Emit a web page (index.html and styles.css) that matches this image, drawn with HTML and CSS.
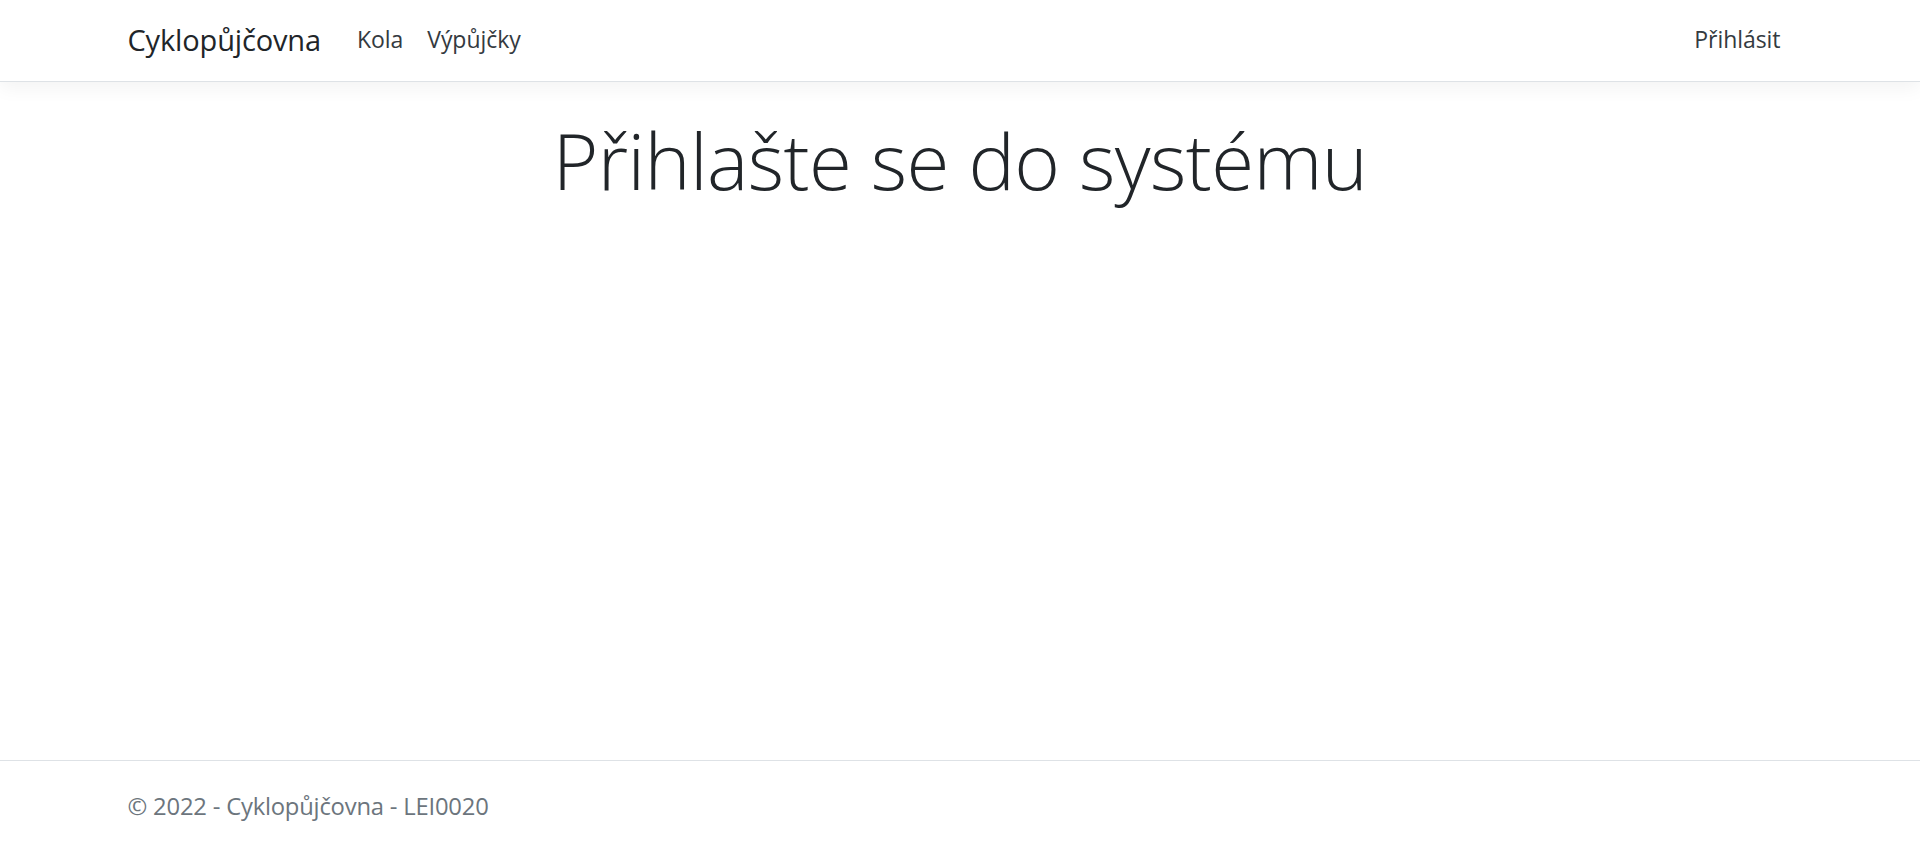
FILE: index.html
```html
<!DOCTYPE html>
<html lang="cs">
<head>
<meta charset="utf-8">
<title>Cyklopůjčovna</title>
<link rel="stylesheet" href="styles.css">
</head>
<body>
<header class="site-header">
  <nav class="navbar">
    <div class="container nav-inner">
      <a class="brand" href="#">Cyklopůjčovna</a>
      <ul class="nav-list">
        <li><a class="nav-link" href="#">Kola</a></li>
        <li><a class="nav-link" href="#">Výpůjčky</a></li>
      </ul>
      <ul class="nav-list nav-right">
        <li><a class="nav-link" href="#">Přihlásit</a></li>
      </ul>
    </div>
  </nav>
</header>
<main class="main">
  <div class="container">
    <div class="text-center">
      <h1 class="display">Přihlašte se do systému</h1>
    </div>
  </div>
</main>
<footer class="footer">
  <div class="container">© 2022 - Cyklopůjčovna - LEI0020</div>
</footer>
</body>
</html>
```

FILE: styles.css
```css
* { box-sizing: border-box; }
html, body { height: 100%; }
body {
  margin: 0;
  font-family: "Segoe UI", "Open Sans", "Noto Sans", Arial, sans-serif;
  font-size: 24px;
  line-height: 1.5;
  color: #212529;
  background: #fff;
  display: flex;
  flex-direction: column;
  min-height: 100vh;
}
a { text-decoration: none; }
.container {
  width: 100%;
  max-width: 1710px;
  margin: 0 auto;
  padding: 0 22.5px;
}
.navbar {
  height: 82px;
  background: #fff;
  border-bottom: 1px solid #dee2e6;
  box-shadow: 0 6px 18px rgba(0, 0, 0, 0.05);
}
.nav-inner {
  height: 100%;
  display: flex;
  align-items: center;
}
.brand {
  font-size: 29px;
  letter-spacing: -0.15px;
  line-height: 45px;
  color: #212529;
  margin-right: 24px;
  margin-top: -2px;
}
.nav-list {
  list-style: none;
  margin: 0;
  padding: 0;
  display: flex;
}
.nav-right { margin-left: auto; }
.nav-link {
  display: block;
  padding: 0 12px;
  font-size: 23px;
  letter-spacing: -0.05px;
  line-height: 36px;
  color: #343a40;
  margin-top: -3px;
}
.main {
  flex: 1;
  padding-top: 32px;
}
.text-center { text-align: center; }
.display {
  margin: 0 0 12px;
  font-size: 78px;
  letter-spacing: -0.6px;
  font-weight: 300;
  line-height: 1.2;
  color: #212529;
}
.footer {
  border-top: 1px solid #dee2e6;
  height: 89px;
  padding-top: 2px;
  line-height: 86px;
  font-size: 23.8px;
  letter-spacing: -0.2px;
  color: #6c757d;
  white-space: nowrap;
}
```
